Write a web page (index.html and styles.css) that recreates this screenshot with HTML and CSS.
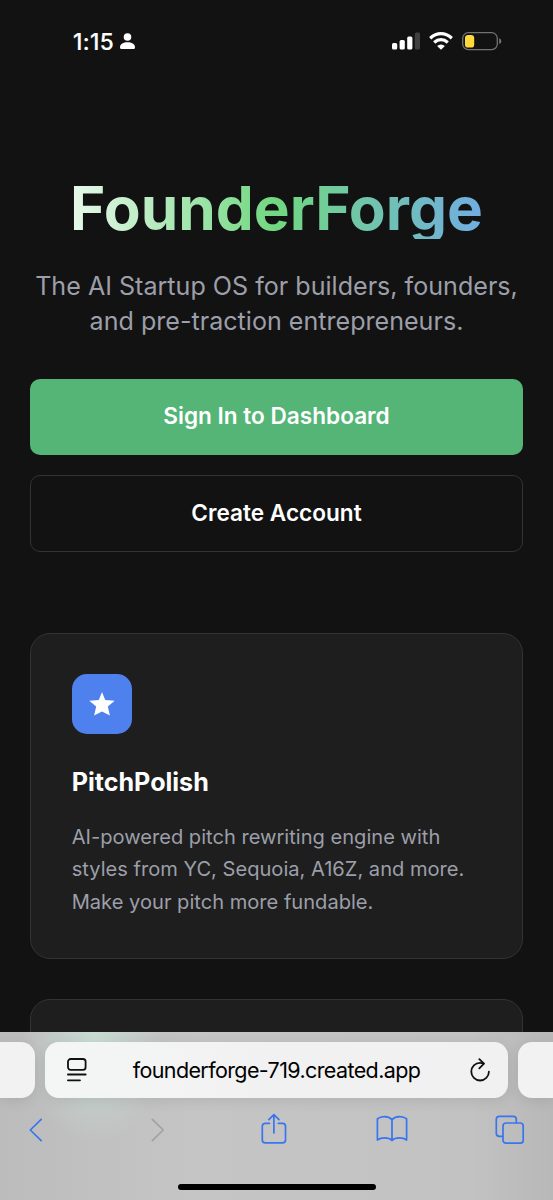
FILE: index.html
```html
<!DOCTYPE html>
<html lang="en">
<head>
<meta charset="utf-8">
<title>FounderForge</title>
<link rel="stylesheet" href="styles.css">
</head>
<body>
<div class="phone">
  <header class="status">
    <div class="clock"><span class="time">1:15</span>
      <svg width="15" height="16" viewBox="0 0 15 16" fill="#fff"><circle cx="7.5" cy="4" r="3.8"/><path d="M0 14.2C0 11 3.5 9.2 7.5 9.2S15 11 15 14.2C15 15.4 14.5 16 13.4 16H1.6C.5 16 0 15.4 0 14.2Z"/></svg>
    </div>
    <div class="signals">
      <svg width="28" height="18" viewBox="0 0 28 18" fill="#fff"><rect x="0" y="11" width="5.2" height="6.5" rx="1.5"/><rect x="7.6" y="8" width="5.2" height="9.5" rx="1.5"/><rect x="15.2" y="4.5" width="5.2" height="13" rx="1.5"/><rect x="22.8" y="0.5" width="5.2" height="17" rx="1.5" fill="#404040"/></svg>
      <svg width="24" height="18" viewBox="0 0 24 18"><g fill="none" stroke="#fff" stroke-width="3.2"><path d="M1.2 6.2Q6.2 1.6 12 1.6T22.8 6.2"/><path d="M5.2 10.5Q8.3 7.7 12 7.7T18.8 10.5"/></g><path d="M12 17.8L8.1 13.9Q9.8 12.4 12 12.4T15.9 13.9Z" fill="#fff"/></svg>
      <svg width="40" height="19" viewBox="0 0 40 19"><rect x=".7" y=".7" width="34.6" height="17" rx="5.6" fill="none" stroke="#727272" stroke-width="1.3"/><rect x="3" y="2.9" width="9.2" height="12.7" rx="3.2" fill="#ffd83b"/><path d="M37.2 6.3Q39.3 7 39.3 9.2T37.2 12.1Z" fill="#777"/></svg>
    </div>
  </header>
  <main class="page">
    <h1 class="title">FounderForge</h1>
    <p class="tagline">The AI Startup OS for builders, founders,<br>and pre-traction entrepreneurs.</p>
    <div class="actions">
      <button class="btn primary">Sign In to Dashboard</button>
      <button class="btn outline">Create Account</button>
    </div>
    <section class="cards">
      <article class="card">
        <div class="badge"><svg width="26" height="26" viewBox="0 0 26 26"><path d="M13 1L16.2 9.1L25.7 9.7L18.8 15.6L20.9 24.6L13 20.4L5.1 24.6L7.2 15.6L.3 9.7L9.8 9.1Z" fill="#fff"/></svg></div>
        <h2 class="card-title">PitchPolish</h2>
        <p class="card-text">AI-powered pitch rewriting engine with<br>styles from YC, Sequoia, A16Z, and more.<br>Make your pitch more fundable.</p>
      </article>
      <article class="card"></article>
    </section>
  </main>
  <footer class="browser">
    <div class="tabs">
      <div class="tab side-left"></div>
      <div class="tab address">
        <svg width="20" height="24" viewBox="0 0 20 24" fill="none" stroke="#111" stroke-width="1.8" stroke-linecap="round"><rect x="1" y="1" width="17.6" height="10.8" rx="2.6"/><path d="M.9 16.5H18.7M.9 22.3H13"/></svg>
        <span class="url">founderforge-719.created.app</span>
        <svg width="20" height="24" viewBox="0 0 20 24" fill="none" stroke="#111" stroke-width="1.8" stroke-linecap="round" stroke-linejoin="round"><path d="M13.5 5.5Q12 4.9 10.1 4.9A8.8 8.8 0 1 0 18.9 13.7"/><path d="M9.3 1.1L14 5.7L9.3 10.3"/></svg>
      </div>
      <div class="tab side-right"></div>
    </div>
    <nav class="tools">
      <svg class="back" width="14" height="24" viewBox="0 0 14 24"><path d="M12.2 1.3L1.3 12L12.2 22.7"/></svg>
      <svg class="forward" width="14" height="24" viewBox="0 0 14 24"><path d="M1.3 1.3L12.2 12L1.3 22.7"/></svg>
      <svg class="share" width="26" height="32" viewBox="0 0 26 32"><path d="M8.5 10.3H4.2Q1.3 10.3 1.3 13.2V27Q1.3 29.9 4.2 29.9H21.6Q24.5 29.9 24.5 27V13.2Q24.5 10.3 21.6 10.3H17.3M12.9 20V1.8M7.8 6.7L12.9 1.6L18 6.7"/></svg>
      <svg class="book" width="32" height="28" viewBox="0 0 32 28"><path d="M16 4.8C12.7 .8 5 .6 1.4 3.9V25C5 22.3 12.7 22.1 16 25.5C19.3 22.1 27 22.3 30.6 25V3.9C27 .6 19.3 .8 16 4.8ZM16 4.8V25.5"/></svg>
      <svg class="windows" width="30" height="30" viewBox="0 0 30 30"><path d="M7.5 21.3H4.3Q1.3 21.3 1.3 18.3V4.3Q1.3 1.3 4.3 1.3H18.3Q21.3 1.3 21.3 4.3V7.5"/><rect x="8" y="8" width="20.2" height="20.2" rx="3"/></svg>
    </nav>
    <div class="home"></div>
  </footer>
</div>
</body>
</html>
```
FILE: styles.css
```css
* { box-sizing: border-box; }
body, h1, h2, p { margin: 0; }
svg { display: block; flex: none; }
body { background: #121212; color: #fff; font-family: Inter, "Liberation Sans", sans-serif; }
.phone { width: 553px; height: 1200px; display: flex; flex-direction: column; overflow: hidden; }
.status { height: 178.7px; flex: none; padding: 30px 51px 0 73px; display: flex; justify-content: space-between; }
.clock { display: flex; gap: 6px; height: 22px; align-items: center; }
.time { font-size: 22.6px; font-weight: 500; letter-spacing: .4px; -webkit-text-stroke: .2px #fff; }
.signals { display: flex; gap: 9.5px; height: 22px; align-items: center; }
.signals svg:first-child { margin-right: -.5px; }
.page { flex: 1; min-height: 0; overflow: hidden; padding: 0 30.2px; }
.title { width: 492.6px; font-size: 60.3px; line-height: 60.3px; font-weight: 700; text-align: center; white-space: nowrap; color: transparent; background: linear-gradient(to right, #fff, #70d780 50%, #71a5f5); background-clip: text; -webkit-background-clip: text; }
.tagline { margin-top: 30.2px; font-size: 25.1px; line-height: 35.2px; text-align: center; white-space: nowrap; color: #9c9fa9; }
.actions { margin-top: 39.6px; display: flex; flex-direction: column; gap: 20.1px; }
.btn { border: 0; border-radius: 10px; color: #fff; font-family: inherit; font-size: 22.6px; font-weight: 600; padding: 0 0 2px; }
.primary { height: 75.4px; background: #54b576; }
.outline { height: 77.7px; background: transparent; border: 1.25px solid #333; }
.cards { margin-top: 80.3px; display: flex; flex-direction: column; gap: 40.2px; }
.card { height: 326.5px; flex: none; padding: 40.5px; border: 1.25px solid #333; border-radius: 20px; background: #1e1e1e; }
.badge { width: 60.3px; height: 60.3px; border-radius: 15px; background: #4f81ee; display: grid; place-items: center; }
.card-title { margin-top: 30.5px; font-size: 25.1px; line-height: 35.2px; font-weight: 700; }
.card-text { margin-top: 20.6px; font-size: 20.1px; line-height: 32.7px; white-space: nowrap; color: #9c9fa9; }
.browser { height: 168px; flex: none; padding-top: 10px; display: flex; flex-direction: column; background: radial-gradient(ellipse 70px 100px at 94px 10px, #c8ddd4 0%, rgba(200,221,212,0) 100%), linear-gradient(90deg, #bcbcbc, #c5c5c5 35%, #c2c2c2 85%, #b8b8b8); }
.tabs { display: flex; gap: 10px; height: 56px; }
.tab { background: #f2f2f2; box-shadow: 0 3px 14px rgba(0,0,0,.09); }
.side-left { width: 35px; border-radius: 0 14px 14px 0; }
.side-right { flex: 1; border-radius: 14px 0 0 14px; }
.address { width: 463px; border-radius: 14px; padding: 0 18px 0 22px; display: flex; align-items: center; justify-content: space-between; background: linear-gradient(90deg, #f4f6f5, #f1f1f1 50%); }
.url { color: #000; font-size: 21.5px; letter-spacing: -.61px; margin-right: 4px; white-space: nowrap; }
.tools { height: 63px; padding: 0 0 0 29px; display: flex; align-items: center; fill: none; stroke: #3975ef; stroke-width: 1.7; stroke-linecap: round; stroke-linejoin: round; }
.forward { stroke: #a2a2a2; margin-left: 107.5px; }
.share { margin-left: 96px; margin-bottom: 1px; }
.book { margin-left: 89.5px; margin-bottom: 1px; }
.windows { margin-left: 87px; }
.home { width: 198px; height: 6px; margin: 23px auto 0; border-radius: 3px; background: #000; }
```
